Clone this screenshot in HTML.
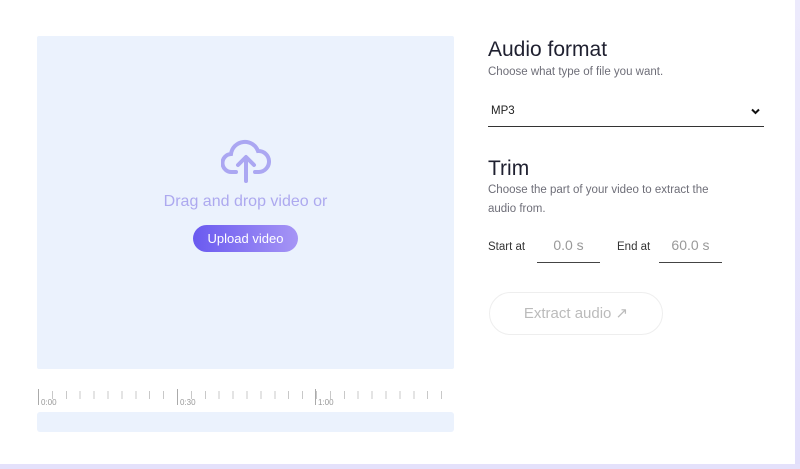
<!DOCTYPE html>
<html><head><style>
*{margin:0;padding:0;box-sizing:border-box}
body{width:800px;height:469px;background:#fff;font-family:"Liberation Sans",sans-serif;position:relative;overflow:hidden}
.rb{position:absolute;right:0;top:0;width:5px;height:469px;background:linear-gradient(#eceafc,#e2dffb)}
.bb{position:absolute;left:0;bottom:0;width:800px;height:5px;background:#e4e1fb}
.drop{position:absolute;left:37px;top:36px;width:417px;height:333px;background:#ebf2fd;border-radius:2px}
.drop .t{position:absolute;left:0;width:100%;top:157px;text-align:center;color:#ada9ef;font-size:16px}
.btn{position:absolute;left:156px;top:189px;width:105px;height:27px;border-radius:14px;background:linear-gradient(90deg,#6a5af0,#a695f5);color:#fff;font-size:13px;text-align:center;line-height:27px}
.ticks{position:absolute;left:38px;top:391px;width:414px;height:8px;background:repeating-linear-gradient(90deg,#c8c8c8 0 1px,transparent 1px 13.9px)}
.maj{position:absolute;top:389px;width:1px;height:16px;background:#aaa}
.lbl{position:absolute;top:398px;font-size:8px;color:#999}
.bar{position:absolute;left:37px;top:412px;width:417px;height:20px;background:#ebf2fd;border-radius:3px}
h2{position:absolute;left:488px;font-weight:normal;font-size:21px;color:#1f2030}
.s{position:absolute;left:488px;font-size:11.5px;color:#6e6e78;line-height:19px}
.sel{position:absolute;left:488px;top:98px;width:276px;height:29px;border-bottom:1.5px solid #333;font-size:11.5px;color:#222;padding:7px 3px}
.fld{position:absolute;top:237px;height:26px;border-bottom:1.5px solid #444;font-size:14px;color:#999;text-align:center}
.lab{position:absolute;top:241px;font-size:11.5px;color:#333}
.ex{position:absolute;left:489px;top:292px;width:174px;height:43px;border:1px solid #eee;border-radius:22px;color:#bbb;font-size:15px;line-height:41px;text-align:center}
</style></head><body>
<div class="drop">
<svg style="position:absolute;left:184px;top:103px" width="50" height="44" viewBox="0 0 50 44"><path d="M15 33 H11 A9 9 0 0 1 10 15 A14 14 0 0 1 37 12 A10 10 0 0 1 38 33 H34" fill="none" stroke="#aba7f2" stroke-width="4" stroke-linecap="round"/><path d="M25 42 V19 M17 26 L25 18 L33 26" fill="none" stroke="#aba7f2" stroke-width="4" stroke-linecap="round" stroke-linejoin="round"/></svg>
<div class="t">Drag and drop video or</div>
<div class="btn">Upload video</div>
</div>
<div class="ticks"></div>
<div class="maj" style="left:38px"></div><div class="maj" style="left:177px"></div><div class="maj" style="left:315px"></div>
<div class="lbl" style="left:41px">0:00</div><div class="lbl" style="left:180px">0:30</div><div class="lbl" style="left:318px">1:00</div>
<div class="bar"></div>
<h2 style="top:38px">Audio format</h2>
<div class="s" style="top:63px">Choose what type of file you want.</div>
<div class="sel">MP3<svg style="position:absolute;right:4px;top:10px" width="9" height="7" viewBox="0 0 9 7"><path d="M1 1.5 L4.5 5 L8 1.5" fill="none" stroke="#111" stroke-width="2"/></svg></div>
<h2 style="top:157px">Trim</h2>
<div class="s" style="top:181px">Choose the part of your video to extract the<br>audio from.</div>
<div class="lab" style="left:488px">Start at</div>
<div class="fld" style="left:537px;width:63px">0.0 s</div>
<div class="lab" style="left:617px">End at</div>
<div class="fld" style="left:659px;width:63px">60.0 s</div>
<div class="ex">Extract audio ↗</div>
<div class="rb"></div><div class="bb"></div>
</body></html>
